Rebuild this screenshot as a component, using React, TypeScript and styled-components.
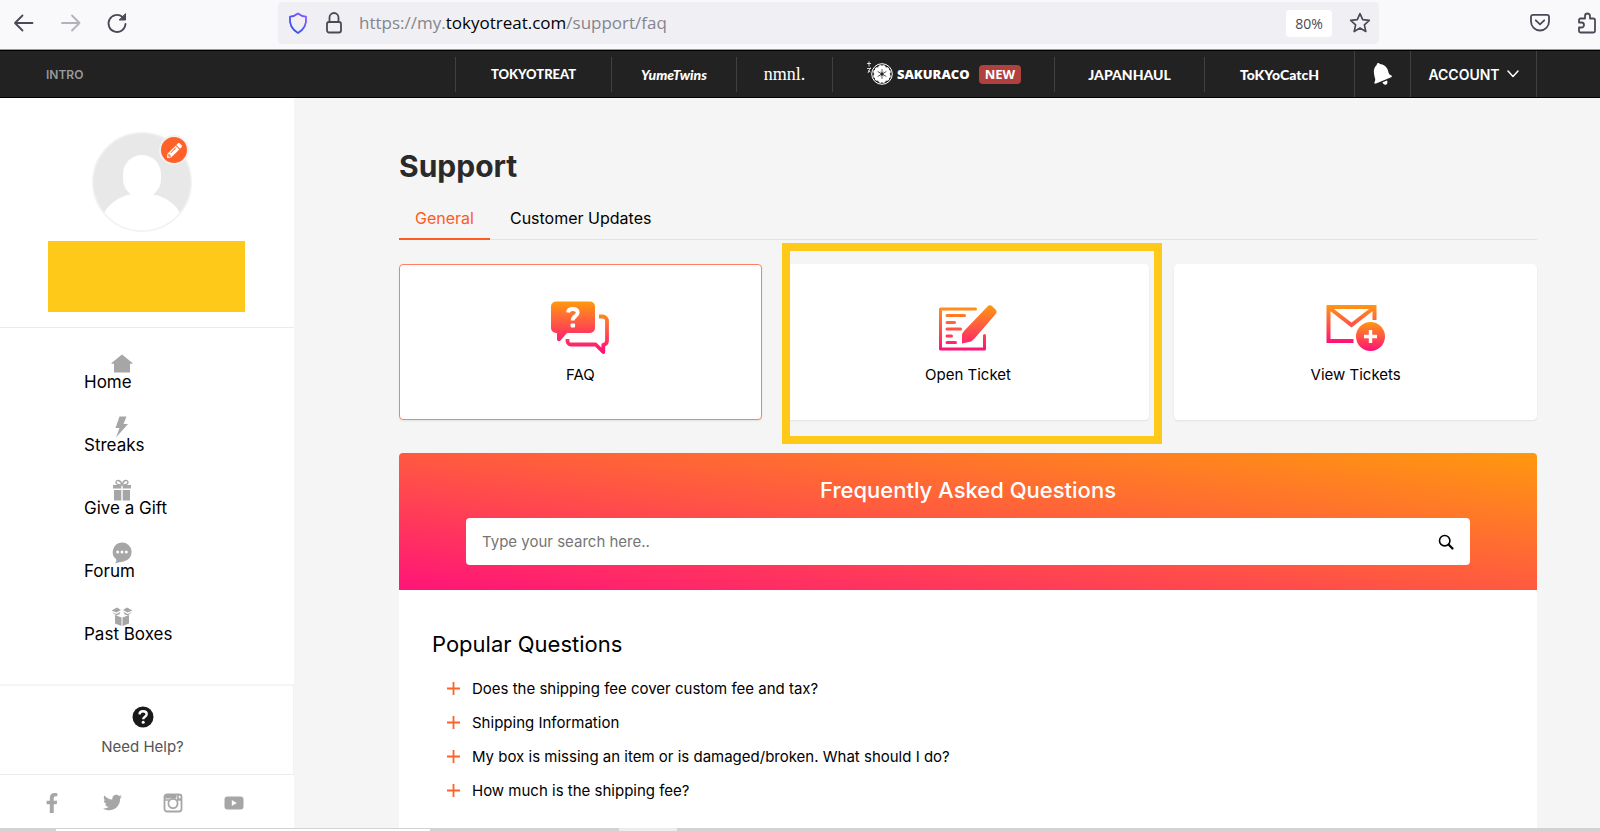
import React from "react";
import styled, { createGlobalStyle, css } from "styled-components";
import { FaFacebookF, FaTwitter, FaPencilAlt } from "react-icons/fa";

const GlobalStyle = createGlobalStyle`
  * { box-sizing: border-box; }
  body { margin: 0; background: #f5f5f5; color: #000; font-family: Inter, "Open Sans", sans-serif; font-size: 15px; }
  a { color: inherit; text-decoration: none; }
  button { font: inherit; color: inherit; background: none; border: 0; padding: 0; cursor: pointer; }
  h1, h2, p, ul { margin: 0; padding: 0; font-weight: 400; }
  ul { list-style: none; }
  svg { display: block; flex: none; }
`;

const Page = styled.div`
  min-height: 100vh;
  display: flex;
  flex-direction: column;
`;

/* Browser bar */

const BrowserBar = styled.header`
  height: 50px;
  padding: 2px 4px 0 12px;
  display: flex;
  align-items: flex-start;
  background: #f9f9fb;
  border-bottom: 1px solid #999;
  color: #4a4957;
`;

const HistoryButtons = styled.div`
  height: 42px;
  width: 266px;
  display: flex;
  align-items: center;
  gap: 23px;
`;

const IconButton = styled.button<{ $faded?: boolean }>`
  display: flex;
  opacity: ${(p) => (p.$faded ? 0.4 : 1)};
`;

const AddressBar = styled.div`
  flex: 1;
  height: 42px;
  padding: 0 8px 0 9px;
  display: flex;
  align-items: center;
  gap: 17px;
  background: #f0f0f4;
  border-radius: 4px;
`;

const Address = styled.div`
  flex: 1;
  color: #85858c;
  font: 17px/24px "Open Sans", sans-serif;
  white-space: nowrap;
`;

const AddressHost = styled.span`
  color: #000;
`;

const ZoomLevel = styled.button`
  width: 46px;
  height: 27px;
  background: #fff;
  border-radius: 4px;
  font: 14px "Open Sans", sans-serif;
`;

const BrowserTools = styled.div`
  height: 42px;
  width: 217px;
  display: flex;
  align-items: center;
  justify-content: flex-end;
  gap: 28px;
`;

/* Site navigation */

const SiteNav = styled.nav`
  height: 48px;
  padding: 0 63px 0 46px;
  display: flex;
  align-items: center;
  justify-content: space-between;
  background: #222;
  border: solid #000;
  border-width: 1px 0;
  color: #fff;
`;

const IntroLink = styled.a`
  color: #999;
  font-size: 12px;
  font-weight: 600;
`;

const BrandList = styled.ul`
  display: flex;
  align-items: center;
`;

const NavItem = styled.li<{ $width: number; $tall?: boolean }>`
  width: ${(p) => p.$width}px;
  height: ${(p) => (p.$tall ? 46 : 35)}px;
  display: flex;
  align-items: center;
  justify-content: center;
  border-left: 1px solid #404040;

  &:last-child { border-right: 1px solid #404040; }
`;

const wordmarks = {
  tokyotreat: css`font: 900 13px Lato, sans-serif;`,
  yumetwins: css`font: italic 900 14px Lato, sans-serif;`,
  nmnl: css`font: 18px "Liberation Serif", serif;`,
  sakuraco: css`font: 800 13px "Open Sans", sans-serif;`,
  japanhaul: css`font: 900 14px Lato, sans-serif;`,
  tokyocatch: css`font: 900 14px Lato, sans-serif;`,
};

const Wordmark = styled.a<{ $brand: keyof typeof wordmarks }>`
  display: flex;
  align-items: center;
  gap: 4px;
  white-space: nowrap;
  ${(p) => wordmarks[p.$brand]}
`;

const NewBadge = styled.span`
  height: 19px;
  margin-left: 5px;
  padding: 0 6px;
  background: #b0413e;
  border-radius: 4px;
  font: 700 13px/19px "Open Sans", sans-serif;
`;

const AccountButton = styled.button`
  display: flex;
  align-items: center;
  gap: 7px;
  font-size: 14px;
  font-weight: 600;
`;

/* Sidebar */

const Body = styled.div`
  flex: 1;
  display: flex;
`;

const Sidebar = styled.aside`
  width: 294px;
  flex: none;
  display: flex;
  flex-direction: column;
  background: #fff;
`;

const Profile = styled.section`
  height: 230px;
  padding: 34px 0 0 48px;
  border-bottom: 1px solid #ebebeb;
`;

const Avatar = styled.div`
  position: relative;
  width: 100px;
  margin: 0 0 9px 44px;
`;

const EditButton = styled.button`
  position: absolute;
  top: 3px;
  right: 3px;
  width: 30px;
  height: 30px;
  display: flex;
  align-items: center;
  justify-content: center;
  background: #ff6228;
  border: 2px solid #f1f1f1;
  border-radius: 50%;
  color: #fff;
`;

const NameBanner = styled.div`
  width: 197px;
  height: 71px;
  background: #ffc919;
`;

const Menu = styled.ul`
  flex: 1;
  padding: 25px 0 0 84px;
`;

const MenuItem = styled.li`
  height: 63px;
`;

const MenuLink = styled.a`
  width: 120px;
  display: flex;
  flex-direction: column;
  font-size: 17px;
  line-height: 20px;

  svg { margin: 0 0 -3px 27px; }
`;

const Help = styled.a`
  height: 90px;
  padding: 20px 8px 0 0;
  display: flex;
  flex-direction: column;
  align-items: center;
  gap: 9px;
  border-top: 2px solid #f5f5f5;
  border-right: 1px solid #f1f1f1;
  color: #555;
  line-height: 20px;
`;

const Socials = styled.div`
  height: 54px;
  padding: 2px 50px 0 42px;
  display: flex;
  align-items: center;
  justify-content: space-between;
  border-top: 1px solid #ececec;
  color: #a6a6a6;
`;

const SocialLink = styled.a`
  width: 20px;
  display: flex;
  justify-content: center;
`;

/* Support content */

const Main = styled.main`
  flex: 1;
  min-width: 0;
  padding: 48px 63px 0 105px;
  display: flex;
  flex-direction: column;
`;

const Title = styled.h1`
  color: #2a2a2a;
  font-size: 30px;
  line-height: 40px;
  font-weight: 700;
`;

const Tabs = styled.div`
  height: 42px;
  margin-top: 12px;
  display: flex;
  border-bottom: 1px solid #e3e3e3;
`;

const Tab = styled.button<{ $active?: boolean }>`
  height: 42px;
  padding: 0 16px;
  margin-right: 4px;
  border-bottom: 2px solid ${(p) => (p.$active ? "#ff5a1f" : "transparent")};
  color: ${(p) => (p.$active ? "#ff5a1f" : "#000")};
  font-size: 16px;
`;

const Cards = styled.div`
  margin-top: 24px;
  display: grid;
  grid-template-columns: repeat(3, 1fr);
  gap: 25px;
`;

const Card = styled.a<{ $active?: boolean }>`
  position: relative;
  height: 156px;
  padding-top: 35px;
  display: flex;
  flex-direction: column;
  align-items: center;
  gap: 5px;
  background: #fff;
  border: 1px solid ${(p) => (p.$active ? "#ff7f62" : "#fff")};
  border-radius: 4px;
  box-shadow: 0 1px 2px rgba(0, 0, 0, 0.08);
  line-height: 20px;
`;

const FocusFrame = styled.span`
  position: absolute;
  inset: -22px -14px -25px -6px;
  border: 8px solid #ffc919;
`;

const Panel = styled.section`
  flex: 1;
  margin-top: 33px;
  background: #fff;
  border-radius: 4px 4px 0 0;
  overflow: hidden;
`;

const Banner = styled.div`
  height: 137px;
  padding: 22px 67px 0;
  background: linear-gradient(to top right, #ff1478, #ff5a40 50%, #ff980f);
`;

const BannerTitle = styled.h2`
  color: #fff;
  font-size: 22px;
  line-height: 30px;
  font-weight: 500;
  text-align: center;
`;

const SearchForm = styled.form`
  height: 47px;
  margin-top: 13px;
  padding: 0 16px;
  display: flex;
  align-items: center;
  background: #fff;
  border-radius: 4px;
`;

const SearchInput = styled.input`
  flex: 1;
  min-width: 0;
  padding: 0;
  border: 0;
  outline: 0;
  background: none;
  font: inherit;

  &::placeholder { color: #757575; }
`;

const Questions = styled.div`
  padding: 39px 34px 0 33px;
`;

const QuestionsTitle = styled.h2`
  font-size: 22px;
  line-height: 30px;
`;

const QuestionList = styled.ul`
  margin-top: 12px;
  padding-left: 15px;
`;

const Question = styled.button`
  height: 34px;
  display: flex;
  align-items: center;
  gap: 12px;
`;

const Taskbar = styled.footer`
  height: 3px;
  display: flex;
  padding-left: 56px;
  background: #d2d2d2;
`;

const TaskWindow = styled.div`
  width: 374px;
  margin: 1px 189px 0 0;
  background: #fff;
`;

const TaskHandle = styled.div`
  width: 58px;
  background: #ededed;
`;

/* Icons */

const Stroke = (p: React.SVGProps<SVGSVGElement>) => (
  <svg fill="none" stroke="currentColor" strokeWidth="1.8" strokeLinecap="round" strokeLinejoin="round" aria-hidden="true" {...p} />
);

const BackIcon = () => (
  <Stroke width="24" height="24" viewBox="0 0 24 24"><path d="M20.500 12H3M10.500 4.500 3 12l7.500 7.500" /></Stroke>
);
const ForwardIcon = () => (
  <Stroke width="24" height="24" viewBox="0 0 24 24"><path d="M3 12h17.500M13 4.500 20.500 12 13 19.500" /></Stroke>
);
const ReloadIcon = () => (
  <Stroke width="22" height="22" viewBox="0 0 22 22">
    <path d="M19.500 12a8.500 8.500 0 1 1-3-7l2 2" />
    <path d="M19.500 2v6h-6z" fill="currentColor" strokeWidth="1" />
  </Stroke>
);
const ShieldIcon = () => (
  <Stroke width="22" height="24" viewBox="0 0 22 24" stroke="url(#shield)">
    <defs>
      <linearGradient id="shield" x1="0" y1="1" x2="1" y2="0">
        <stop offset="0" stopColor="#1d4ff0" />
        <stop offset="1" stopColor="#9059ff" />
      </linearGradient>
    </defs>
    <path d="M11 2.500c2.500 2 5 3 8 3.200.8 7-1.500 12.600-8 16.300C4.500 18.300 2.200 12.700 3 5.700c3-.2 5.500-1.200 8-3.200z" />
  </Stroke>
);
const LockIcon = () => (
  <Stroke width="16" height="22" viewBox="0 0 16 22">
    <rect x="1" y="10" width="14" height="10.500" rx="2" />
    <path d="M3.500 10V5.500a4.500 4.500 0 0 1 9 0V10" />
  </Stroke>
);
const StarIcon = () => (
  <Stroke width="22" height="22" viewBox="0 0 22 22" strokeWidth="1.700">
    <path d="m11 1.700 2.700 6 6.600.7-4.900 4.400 1.400 6.700-5.800-3.400-5.800 3.400 1.400-6.700-4.900-4.400 6.600-.7z" />
  </Stroke>
);
const PocketIcon = () => (
  <Stroke width="20" height="20" viewBox="0 0 20 20">
    <path d="M3 1.800h14a2 2 0 0 1 2 2v4.700a9 9 0 0 1-18 0V3.800a2 2 0 0 1 2-2z" />
    <path d="m5.800 7.300 4.200 4 4.200-4" />
  </Stroke>
);
const PuzzleIcon = () => (
  <Stroke width="18" height="22" viewBox="0 0 18 22">
    <path d="M2.500 20.500h13a1.500 1.500 0 0 0 1.500-1.500V8a1.500 1.500 0 0 0-1.500-1.500H12V4a2.500 2.500 0 0 0-5 0v2.500H2.500A1.500 1.500 0 0 0 1 8v2.500h2.500a2.500 2.500 0 0 1 0 5H1V19a1.500 1.500 0 0 0 1.500 1.500z" />
  </Stroke>
);
const SakuraIcon = () => (
  <svg width="27" height="26" viewBox="0 0 27 26" fill="none" aria-hidden="true">
    <path d="M1 2.500h4M3 .5v5M1 7.500h4M2 9.500l2.500 1.500M4.500 6.500 2 12" stroke="#fff" strokeWidth=".8" />
    <circle cx="16" cy="13" r="10.300" stroke="#fff" />
    <g fill="#fff">
      {[0, 60, 120, 180, 240, 300].map((a) => (
        <path key={a} transform={`rotate(${a} 16 13)`} d="M16 12.500 12.200 7.500c-.5-2 1-3.500 2.800-3.500l1 1 1-1c1.800 0 3.300 1.500 2.800 3.500z" />
      ))}
    </g>
    <g stroke="#222" strokeWidth=".7">
      {[0, 60, 120, 180, 240, 300].map((a) => (
        <path key={a} transform={`rotate(${a} 16 13)`} d="M16 13V8" />
      ))}
    </g>
    <circle cx="16" cy="13" r="1.500" fill="#222" />
  </svg>
);
const BellIcon = () => (
  <svg width="20" height="24" viewBox="0 0 20 24" fill="#fff" aria-hidden="true">
    <path d="M4.500 1.200c1-.7 2 .2 2.300.8 4.500.4 8 3.600 8.600 8 .2 1.600 1 2.700 2.600 3.200 1.200.3 1.200 1.500.2 2L3 21.500c-1.200.5-2-.5-1.400-1.600.8-1.500.8-2.400.3-4C.600 11.500-.200 6.500 3.700 3c.1-.8.2-1.400.8-1.800z" />
    <path d="M9.500 20.300 14 18.500c.9 1.500.5 3.600-1 4.200-1.500.6-3-.6-3.500-2.400z" />
  </svg>
);
const ChevronIcon = () => (
  <Stroke width="12" height="8" viewBox="0 0 12 8" strokeWidth="1.500"><path d="m1 1 5 5.500L11 1" /></Stroke>
);
const AvatarPicture = () => (
  <svg width="100" height="100" viewBox="0 0 100 100" role="img" aria-label="Profile picture">
    <defs><clipPath id="face"><circle cx="50" cy="50" r="48.500" /></clipPath></defs>
    <circle cx="50" cy="50" r="49" fill="#fff" stroke="#f2f2f2" strokeWidth="2" />
    <g clipPath="url(#face)">
      <rect width="100" height="100" fill="#e8e8e8" />
      <rect x="31" y="23" width="38" height="43" rx="19" fill="#fff" />
      <ellipse cx="50" cy="95" rx="42" ry="34" fill="#fff" />
    </g>
  </svg>
);

const MenuSvg = (p: React.SVGProps<SVGSVGElement>) => (
  <svg width="22" height="22" viewBox="0 0 22 22" fill="#a6a6a6" aria-hidden="true" {...p} />
);
const HomeIcon = () => (
  <MenuSvg><path d="M11 1.500 21.500 10v.7H19V19.500H3V10.700H.500V10z" /></MenuSvg>
);
const BoltIcon = () => (
  <MenuSvg><path d="M8.500.500h7L12.500 8H17L5 21.500 8.500 12H4.500z" /></MenuSvg>
);
const GiftIcon = () => (
  <MenuSvg>
    <path d="M2 6h8.300v3.500H2zM11.700 6H20v3.500h-8.300zM3 11h7.300v10.500H3zM11.700 11H19v10.500h-7.300z" />
    <path d="M11 6C8.500 6 5 5.500 5 3.300 5 .500 9.500.500 11 6zM11 6c2.500 0 6-.5 6-2.700C17 .500 12.500.500 11 6z" fill="none" stroke="#a6a6a6" strokeWidth="1.400" />
  </MenuSvg>
);
const ForumIcon = () => (
  <MenuSvg>
    <path d="M11 .500a9.500 9.500 0 0 1 1.500 18.900c-3 .5-5.500 1-8.500 2 1-1.500 1.400-2.500 1.300-4A9.500 9.500 0 0 1 11 .500z" />
    <g fill="#fff"><circle cx="6.700" cy="10" r="1.500" /><circle cx="11" cy="10" r="1.500" /><circle cx="15.300" cy="10" r="1.500" /></g>
  </MenuSvg>
);
const BoxIcon = () => (
  <MenuSvg>
    <path d="M6 2.500 10 5 5.500 7.500.500 5.500zM16 2.500 12 5l4.500 2.500 5-2zM4 10l6.500 2.500V21L4 18.500zM18 10l-6.500 2.500V21l6.500-2.500z" />
    <path d="m.800 7 4.700 2L9.500 6.800l-1 2.400L5.500 10.500zM21.200 7l-4.700 2-4-2.200 1 2.400 3 1.300z" />
  </MenuSvg>
);
const HelpIcon = () => (
  <svg width="22" height="22" viewBox="0 0 22 22" aria-hidden="true">
    <circle cx="11" cy="11" r="10.500" fill="#1a1a1a" />
    <path d="M7.500 8.300C7.700 6 9.200 5.300 11 5.300c2.200 0 3.700 1.100 3.700 2.900 0 2.500-3.500 2.500-3.500 5" fill="none" stroke="#fff" strokeWidth="2.400" />
    <circle cx="11.200" cy="16.200" r="1.500" fill="#fff" />
  </svg>
);
const InstagramIcon = () => (
  <svg width="20" height="20" viewBox="0 0 20 20" fill="none" stroke="currentColor" aria-hidden="true">
    <rect x="1.500" y="1.500" width="17" height="17" rx="2.500" strokeWidth="1.800" />
    <path d="M1.500 5.500V3.500a2 2 0 0 1 2-2h10v4z" fill="currentColor" stroke="none" />
    <path d="M1.500 7h4.500M14 7h4.500M15 2v4h3.500" strokeWidth="1.600" />
    <circle cx="10" cy="10.500" r="4.600" fill="#fff" strokeWidth="1.800" />
  </svg>
);
const YoutubeIcon = () => (
  <svg width="20" height="14" viewBox="0 0 20 14" aria-hidden="true">
    <rect x=".5" y=".5" width="19" height="13" rx="3" fill="currentColor" />
    <path d="M7.800 4v6l5-3z" fill="#fff" />
  </svg>
);

const WarmGradient = ({ id, top, bottom }: { id: string; top: number; bottom: number }) => (
  <linearGradient id={id} gradientUnits="userSpaceOnUse" x1="0" y1={top} x2="0" y2={bottom}>
    <stop offset="0" stopColor="#ff980f" />
    <stop offset=".5" stopColor="#ff5546" />
    <stop offset="1" stopColor="#ff0f78" />
  </linearGradient>
);
const FaqIcon = () => (
  <svg width="60" height="60" viewBox="0 0 60 60" aria-hidden="true">
    <defs><WarmGradient id="faq-a" top={2} bottom={46} /><WarmGradient id="faq-b" top={10} bottom={52} /></defs>
    <path d="M6 1.500h34a5 5 0 0 1 5 5V28a5 5 0 0 1-5 5H17l-6.500 7.500c-1.500 1.300-3.500.5-3.500-1.500v-6H6a5 5 0 0 1-5-5V6.500a5 5 0 0 1 5-5z" fill="url(#faq-a)" />
    <path d="M18 12.500C18.300 9.700 20.300 9 22.700 9c3 0 5 1.400 5 3.800 0 3.600-5 3.200-5 7.700" fill="none" stroke="#fff" strokeWidth="3.800" />
    <rect x="20.600" y="23.500" width="4.500" height="4" rx="1" fill="#fff" />
    <path d="M49 16.500h3.500a4.500 4.500 0 0 1 4.500 4.500v19.500a4.500 4.500 0 0 1-3.700 4.400V52l-7.600-7.500H21a3.500 3.500 0 0 1-3.500-3.500v-2" fill="none" stroke="url(#faq-b)" strokeWidth="3.800" strokeLinejoin="round" />
  </svg>
);
const OpenTicketIcon = () => (
  <svg width="60" height="60" viewBox="0 0 60 60" aria-hidden="true">
    <defs><WarmGradient id="open-a" top={5} bottom={51} /></defs>
    <g fill="none" stroke="url(#open-a)" strokeWidth="3" strokeLinecap="round" strokeLinejoin="round">
      <path d="M37.500 9H2.500v40h44V35.500" />
      <path d="M9 15.500h17.500M9 22.500h7.500M9 29h13.500M9 36h4.500M9 42.500h8.500" />
    </g>
    <path d="M49.500 6.500c1.500-1.600 3.300-1.500 4.700-.2l3.300 3.200c1.300 1.400 1.500 3.200 0 4.800L36.500 38.500l-3.300 3-9.200 2V34l2.500-3.500z" fill="url(#open-a)" />
  </svg>
);
const ViewTicketsIcon = () => (
  <svg width="60" height="60" viewBox="0 0 60 60" aria-hidden="true">
    <defs><WarmGradient id="view-a" top={5} bottom={43} /><WarmGradient id="view-b" top={22} bottom={51} /></defs>
    <g fill="none" stroke="url(#view-a)" strokeWidth="4">
      <path d="M27.500 41H2.500V7h46v13" />
      <path d="m3.500 8 22 17 22-17" />
    </g>
    <circle cx="44.500" cy="36.500" r="14.500" fill="url(#view-b)" />
    <path d="M44.500 30v13M38 36.500h13" stroke="#fff" strokeWidth="3.400" />
  </svg>
);
const SearchIcon = () => (
  <Stroke width="16" height="16" viewBox="0 0 16 16"><circle cx="6.700" cy="6.700" r="5.200" strokeWidth="1.600" /><path d="m10.800 10.800 3.700 3.700" strokeWidth="2.200" /></Stroke>
);
const PlusIcon = () => (
  <Stroke width="13" height="13" viewBox="0 0 13 13" stroke="#ff6228" strokeLinecap="butt"><path d="M6.500 0v13M0 6.500h13" /></Stroke>
);

const menu = [
  { label: "Home", Icon: HomeIcon },
  { label: "Streaks", Icon: BoltIcon },
  { label: "Give a Gift", Icon: GiftIcon },
  { label: "Forum", Icon: ForumIcon },
  { label: "Past Boxes", Icon: BoxIcon },
];

const questions = [
  "Does the shipping fee cover custom fee and tax?",
  "Shipping Information",
  "My box is missing an item or is damaged/broken. What should I do?",
  "How much is the shipping fee?",
];

export default function App() {
  return (
    <Page>
      <GlobalStyle />
      <BrowserBar>
        <HistoryButtons>
          <IconButton aria-label="Back"><BackIcon /></IconButton>
          <IconButton aria-label="Forward" $faded><ForwardIcon /></IconButton>
          <IconButton aria-label="Reload"><ReloadIcon /></IconButton>
        </HistoryButtons>
        <AddressBar>
          <ShieldIcon />
          <LockIcon />
          <Address role="textbox" aria-label="Address">
            https://my.<AddressHost>tokyotreat.com</AddressHost>/support/faq
          </Address>
          <ZoomLevel>80%</ZoomLevel>
          <IconButton aria-label="Bookmark this page"><StarIcon /></IconButton>
        </AddressBar>
        <BrowserTools>
          <IconButton aria-label="Save to Pocket"><PocketIcon /></IconButton>
          <IconButton aria-label="Extensions"><PuzzleIcon /></IconButton>
        </BrowserTools>
      </BrowserBar>

      <SiteNav>
        <IntroLink href="#intro">INTRO</IntroLink>
        <BrandList>
          <NavItem $width={156}><Wordmark $brand="tokyotreat" href="#tokyotreat">TOKYOTREAT</Wordmark></NavItem>
          <NavItem $width={125}><Wordmark $brand="yumetwins" href="#yumetwins">YumeTwins</Wordmark></NavItem>
          <NavItem $width={96}><Wordmark $brand="nmnl" href="#nmnl">nmnl.</Wordmark></NavItem>
          <NavItem $width={222}>
            <Wordmark $brand="sakuraco" href="#sakuraco"><SakuraIcon />SAKURACO<NewBadge>NEW</NewBadge></Wordmark>
          </NavItem>
          <NavItem $width={150}><Wordmark $brand="japanhaul" href="#japanhaul">JAPANHAUL</Wordmark></NavItem>
          <NavItem $width={150}><Wordmark $brand="tokyocatch" href="#tokyocatch">ToKYoCatcH</Wordmark></NavItem>
          <NavItem $width={56} $tall><IconButton aria-label="Notifications"><BellIcon /></IconButton></NavItem>
          <NavItem $width={127} $tall><AccountButton>ACCOUNT<ChevronIcon /></AccountButton></NavItem>
        </BrandList>
      </SiteNav>

      <Body>
        <Sidebar>
          <Profile>
            <Avatar>
              <AvatarPicture />
              <EditButton aria-label="Edit profile"><FaPencilAlt size={15} /></EditButton>
            </Avatar>
            <NameBanner />
          </Profile>
          <Menu>
            {menu.map(({ label, Icon }) => (
              <MenuItem key={label}><MenuLink href="#menu"><Icon />{label}</MenuLink></MenuItem>
            ))}
          </Menu>
          <Help href="#help"><HelpIcon />Need Help?</Help>
          <Socials>
            <SocialLink href="#facebook" aria-label="Facebook"><FaFacebookF size={20} /></SocialLink>
            <SocialLink href="#twitter" aria-label="Twitter"><FaTwitter size={19} /></SocialLink>
            <SocialLink href="#instagram" aria-label="Instagram"><InstagramIcon /></SocialLink>
            <SocialLink href="#youtube" aria-label="YouTube"><YoutubeIcon /></SocialLink>
          </Socials>
        </Sidebar>

        <Main>
          <Title>Support</Title>
          <Tabs role="tablist">
            <Tab role="tab" aria-selected="true" $active>General</Tab>
            <Tab role="tab" aria-selected="false">Customer Updates</Tab>
          </Tabs>
          <Cards>
            <Card href="#faq" $active><FaqIcon />FAQ</Card>
            <Card href="#open-ticket"><OpenTicketIcon />Open Ticket<FocusFrame /></Card>
            <Card href="#view-tickets"><ViewTicketsIcon />View Tickets</Card>
          </Cards>
          <Panel>
            <Banner>
              <BannerTitle>Frequently Asked Questions</BannerTitle>
              <SearchForm role="search" onSubmit={(e) => e.preventDefault()}>
                <SearchInput type="text" aria-label="Search questions" placeholder="Type your search here.." />
                <IconButton type="submit" aria-label="Search"><SearchIcon /></IconButton>
              </SearchForm>
            </Banner>
            <Questions>
              <QuestionsTitle>Popular Questions</QuestionsTitle>
              <QuestionList>
                {questions.map((q) => (
                  <li key={q}><Question><PlusIcon />{q}</Question></li>
                ))}
              </QuestionList>
            </Questions>
          </Panel>
        </Main>
      </Body>

      <Taskbar>
        <TaskWindow />
        <TaskHandle />
      </Taskbar>
    </Page>
  );
}
